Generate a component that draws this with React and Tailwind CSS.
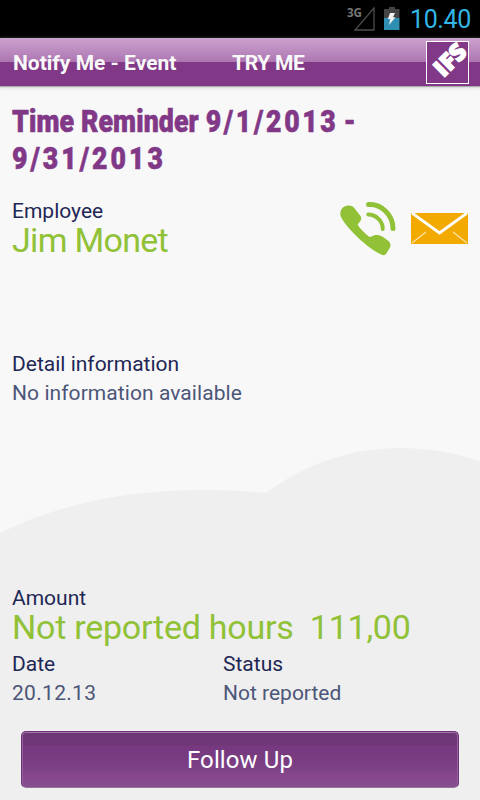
function StatusBar() {
  return (
    <div className="h-[38px] bg-black flex items-start justify-end pr-[11px] text-[#33b5e5]">
      <svg className="w-7 h-8 mr-2 overflow-visible" viewBox="0 0 28 32" fill="none">
        <text x="-1" y="17" fontSize="13" fontWeight="700" fontFamily="Open Sans, sans-serif" fill="#767676" textLength="15" lengthAdjust="spacingAndGlyphs">3G</text>
        <path d="M26 8V30H7Z" stroke="#4c4c4c" strokeWidth="1.3" />
      </svg>
      <svg className="w-4 h-8 mr-[10px]" viewBox="0 0 16 32">
        <path d="M5 7h6v2h4.5v9H0V9h5z" fill="#444" />
        <path d="M0 18h15.5v12H0z" fill="#2f8fb3" />
        <path d="M6 13h5L9 17.3h2.5L5 25l1.2-6H3.8z" fill="#f2f2f2" />
      </svg>
      <span className="w-[59px] text-[25px] leading-[40px] tracking-[-0.4px] text-right whitespace-nowrap">10.40</span>
    </div>
  );
}

function Logo() {
  return (
    <svg className="w-[43px] h-[43px] overflow-visible" viewBox="0 0 43 43">
      <rect x="0.5" y="0.5" width="42" height="42" fill="#813887" stroke="#fff" />
      <text x="0" y="0" transform="translate(17.5 37) rotate(-45)" fontSize="23.5" fontWeight="800" fontFamily="Open Sans, sans-serif" fill="#fff" stroke="#fff" strokeWidth="1.4" textLength="35" lengthAdjust="spacingAndGlyphs">IFS</text>
    </svg>
  );
}

function Header() {
  return (
    <div className="h-12 flex items-center pl-[13px] pr-[11px] bg-[linear-gradient(#cba2cd_0,#ad76b2_24px,#813887_24px,#813887_100%)] text-[#f8f8f8] text-[21px] font-bold shadow-[0_1px_1px_#aaa,0_2px_4px_#ddd]">
      <span className="w-[219px] pt-[3px] whitespace-nowrap">Notify Me - Event</span>
      <span className="flex-1 pt-[3px] tracking-[-0.3px]">TRY ME</span>
      <Logo />
    </div>
  );
}

function PhoneIcon() {
  return (
    <svg className="w-14 h-[54px]" viewBox="0 0 56 54" fill="none">
      <path d="M0.3 11C0.5 8 2 6 4 4.8C7 3 11.5 3 14.3 6L20.5 14C22 16.5 21 19 19 20.7L17.7 22.7C19 25 21.5 28 24.3 30.5C27 33 28.5 34.8 30 35L34.3 33.2C37 32.5 40 33.2 42.7 34.7L48.5 39C50.5 41 51 43 50 45.5L46.5 51.3C45.5 53 44 53.5 42.5 53C31 48.5 11 31 2.7 18C1 15.5 0.2 13.5 0.3 11Z" fill="#90c137" />
      <path d="M28.5 2.6C41 1.5 53 13 53 26.5" stroke="#90c137" strokeWidth="5" strokeLinecap="round" />
      <path d="M28.3 12.5C36 12.5 43 19.5 42.7 27" stroke="#90c137" strokeWidth="4" strokeLinecap="round" />
    </svg>
  );
}

function MailIcon() {
  return (
    <svg className="w-[57px] h-[31px]" viewBox="0 0 57 31" fill="none">
      <path d="M0 0h57v31H0z" fill="#f2a900" />
      <path d="M1 0L28.5 20L56 0" stroke="#fff" strokeWidth="2.8" />
      <path d="M1 30L15 19M56 30L42 19" stroke="#fbe2a6" strokeWidth="1.3" />
    </svg>
  );
}

function Label({ children }) {
  return <div className="text-[21px] leading-[29px] text-[#1e2755]">{children}</div>;
}

function Value({ children }) {
  return <div className="text-[21px] leading-[29px] text-[#4c5678]">{children}</div>;
}

function Hills() {
  return (
    <svg className="absolute left-0 bottom-0 w-[480px] h-[360px]" viewBox="0 440 480 360">
      <path d="M0 533C60 503 130 490 203 490C225 490 245 491 266 493C305 464 350 448 401 448C428 448 455 453 480 461V800H0Z" fill="#efefef" />
    </svg>
  );
}

export default function App() {
  return (
    <div className="relative w-[480px] h-[800px] overflow-hidden bg-[#f8f8f8] font-['Roboto',sans-serif] flex flex-col">
      <Hills />
      <div className="relative flex-1 flex flex-col">
        <StatusBar />
        <Header />

        <div className="flex-1 flex flex-col px-3 pt-[17px]">
          <h1 className="h-[74px] text-[31px] leading-[37px] font-black text-[#813887] whitespace-nowrap origin-left scale-x-[0.86] [-webkit-text-stroke:0.6px_#813887]">
            <span className="tracking-[0.15px]">Time Reminder</span>
            <span className="tracking-[3.1px] ml-[8px]">9/1/2013</span>
            <span className="ml-[6px]">-</span>
            <br />
            <span className="tracking-[3.5px]">9/31/2013</span>
          </h1>

          <div className="h-[153px] pt-5 flex justify-between">
            <div>
              <Label>Employee</Label>
              <div className="text-[34px] leading-[28px] tracking-[-0.7px] text-[#90c137]">Jim Monet</div>
            </div>
            <div className="flex items-start gap-[15px] pt-[5px]">
              <PhoneIcon />
              <div className="pt-[11px]">
                <MailIcon />
              </div>
            </div>
          </div>

          <div className="h-[234px] pt-5">
            <Label>Detail information</Label>
            <Value><span className="tracking-[0.07px]">No information available</span></Value>
          </div>

          <div className="pt-[20px]">
            <div className="h-[66px]">
              <Label>Amount</Label>
              <div className="text-[34px] leading-[28px] tracking-[-0.25px] text-[#90c137] whitespace-pre">Not reported hours  111,00</div>
            </div>
            <div className="flex">
              <div className="w-[211px]">
                <Label>Date</Label>
                <Value><span className="tracking-[0.3px]">20.12.13</span></Value>
              </div>
              <div>
                <Label>Status</Label>
                <Value>Not reported</Value>
              </div>
            </div>
          </div>
        </div>

        <button className="mx-[21px] mb-3 h-[57px] rounded-[5px] border border-[#71307a] border-b-[#94769a] bg-[linear-gradient(#6d3674_0,#6f3776_13px,#77387f_14px,#783c80_27px,#7b3d84_32px,#7e4587_40px,#86458c_42px,#864f8c_100%)] shadow-[inset_0_1px_0_#a078a6,inset_1px_0_0_#91609a,inset_-1px_0_0_#91609a] text-[24px] tracking-[0.1px] text-white">
          Follow Up
        </button>
      </div>
    </div>
  );
}
